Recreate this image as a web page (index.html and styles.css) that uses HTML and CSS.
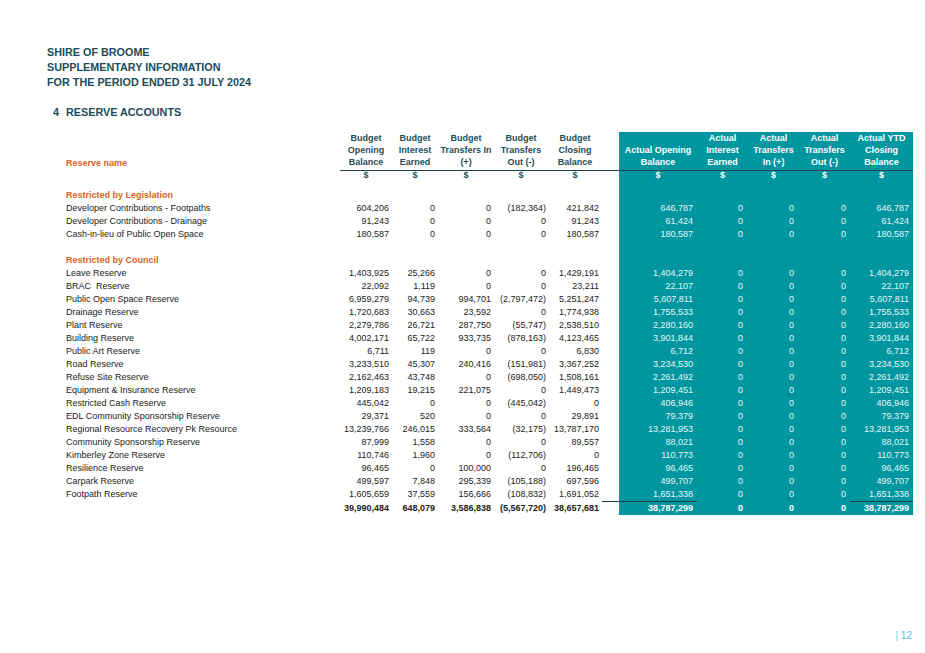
FILE: index.html
```html
<!DOCTYPE html>
<html>
<head>
<meta charset="utf-8">
<title>Reserve Accounts</title>
<link rel="stylesheet" href="styles.css">
</head>
<body>
<div class="page">
  <div class="titles">
    <div class="title">SHIRE OF BROOME</div>
    <div class="title">SUPPLEMENTARY INFORMATION</div>
    <div class="title">FOR THE PERIOD ENDED 31 JULY 2024</div>
  </div>
  <div class="section"><span class="num">4</span>RESERVE ACCOUNTS</div>

  <table class="res">
    <colgroup>
      <col class="c-name"><col class="c-bo"><col class="c-bi"><col class="c-bti"><col class="c-bto"><col class="c-bc">
      <col class="c-gap">
      <col class="c-ao"><col class="c-ai"><col class="c-ati"><col class="c-ato"><col class="c-ac">
    </colgroup>
    <thead>
      <tr class="hdr">
        <th class="name orange">Reserve name</th>
        <th class="b">Budget<br>Opening<br>Balance</th>
        <th class="b">Budget<br>Interest<br>Earned</th>
        <th class="b">Budget<br>Transfers In<br>(+)</th>
        <th class="b">Budget<br>Transfers<br>Out (-)</th>
        <th class="b">Budget<br>Closing<br>Balance</th>
        <th class="b gap"></th>
        <th class="a">Actual Opening<br>Balance</th>
        <th class="a">Actual<br>Interest<br>Earned</th>
        <th class="a">Actual<br>Transfers<br>In (+)</th>
        <th class="a">Actual<br>Transfers<br>Out (-)</th>
        <th class="a">Actual YTD<br>Closing<br>Balance</th>
      </tr>
      <tr class="cur">
        <th></th><th class="b">$</th><th class="b">$</th><th class="b">$</th><th class="b">$</th><th class="b">$</th><th></th>
        <th class="a">$</th><th class="a">$</th><th class="a">$</th><th class="a">$</th><th class="a">$</th>
      </tr>
    </thead>
    <tbody>
      <tr class="sp"><td></td><td></td><td></td><td></td><td></td><td></td><td></td><td class="a"></td><td class="a"></td><td class="a"></td><td class="a"></td><td class="a"></td></tr>
      <tr><td class="name orange bold">Restricted by Legislation</td><td></td><td></td><td></td><td></td><td></td><td></td><td class="a"></td><td class="a"></td><td class="a"></td><td class="a"></td><td class="a"></td></tr>
      <tr><td class="name">Developer Contributions - Footpaths</td><td>604,206</td><td>0</td><td>0</td><td>(182,364)</td><td>421,842</td><td></td><td class="a">646,787</td><td class="a">0</td><td class="a">0</td><td class="a">0</td><td class="a">646,787</td></tr>
      <tr><td class="name">Developer Contributions - Drainage</td><td>91,243</td><td>0</td><td>0</td><td>0</td><td>91,243</td><td></td><td class="a">61,424</td><td class="a">0</td><td class="a">0</td><td class="a">0</td><td class="a">61,424</td></tr>
      <tr><td class="name">Cash-in-lieu of Public Open Space</td><td>180,587</td><td>0</td><td>0</td><td>0</td><td>180,587</td><td></td><td class="a">180,587</td><td class="a">0</td><td class="a">0</td><td class="a">0</td><td class="a">180,587</td></tr>
      <tr><td class="name"></td><td></td><td></td><td></td><td></td><td></td><td></td><td class="a"></td><td class="a"></td><td class="a"></td><td class="a"></td><td class="a"></td></tr>
      <tr><td class="name orange bold">Restricted by Council</td><td></td><td></td><td></td><td></td><td></td><td></td><td class="a"></td><td class="a"></td><td class="a"></td><td class="a"></td><td class="a"></td></tr>
      <tr><td class="name">Leave Reserve</td><td>1,403,925</td><td>25,266</td><td>0</td><td>0</td><td>1,429,191</td><td></td><td class="a">1,404,279</td><td class="a">0</td><td class="a">0</td><td class="a">0</td><td class="a">1,404,279</td></tr>
      <tr><td class="name">BRAC&nbsp; Reserve</td><td>22,092</td><td>1,119</td><td>0</td><td>0</td><td>23,211</td><td></td><td class="a">22,107</td><td class="a">0</td><td class="a">0</td><td class="a">0</td><td class="a">22,107</td></tr>
      <tr><td class="name">Public Open Space Reserve</td><td>6,959,279</td><td>94,739</td><td>994,701</td><td>(2,797,472)</td><td>5,251,247</td><td></td><td class="a">5,607,811</td><td class="a">0</td><td class="a">0</td><td class="a">0</td><td class="a">5,607,811</td></tr>
      <tr><td class="name">Drainage Reserve</td><td>1,720,683</td><td>30,663</td><td>23,592</td><td>0</td><td>1,774,938</td><td></td><td class="a">1,755,533</td><td class="a">0</td><td class="a">0</td><td class="a">0</td><td class="a">1,755,533</td></tr>
      <tr><td class="name">Plant Reserve</td><td>2,279,786</td><td>26,721</td><td>287,750</td><td>(55,747)</td><td>2,538,510</td><td></td><td class="a">2,280,160</td><td class="a">0</td><td class="a">0</td><td class="a">0</td><td class="a">2,280,160</td></tr>
      <tr><td class="name">Building Reserve</td><td>4,002,171</td><td>65,722</td><td>933,735</td><td>(878,163)</td><td>4,123,465</td><td></td><td class="a">3,901,844</td><td class="a">0</td><td class="a">0</td><td class="a">0</td><td class="a">3,901,844</td></tr>
      <tr><td class="name">Public Art Reserve</td><td>6,711</td><td>119</td><td>0</td><td>0</td><td>6,830</td><td></td><td class="a">6,712</td><td class="a">0</td><td class="a">0</td><td class="a">0</td><td class="a">6,712</td></tr>
      <tr><td class="name">Road Reserve</td><td>3,233,510</td><td>45,307</td><td>240,416</td><td>(151,981)</td><td>3,367,252</td><td></td><td class="a">3,234,530</td><td class="a">0</td><td class="a">0</td><td class="a">0</td><td class="a">3,234,530</td></tr>
      <tr><td class="name">Refuse Site Reserve</td><td>2,162,463</td><td>43,748</td><td>0</td><td>(698,050)</td><td>1,508,161</td><td></td><td class="a">2,261,492</td><td class="a">0</td><td class="a">0</td><td class="a">0</td><td class="a">2,261,492</td></tr>
      <tr><td class="name">Equipment &amp; Insurance Reserve</td><td>1,209,183</td><td>19,215</td><td>221,075</td><td>0</td><td>1,449,473</td><td></td><td class="a">1,209,451</td><td class="a">0</td><td class="a">0</td><td class="a">0</td><td class="a">1,209,451</td></tr>
      <tr><td class="name">Restricted Cash Reserve</td><td>445,042</td><td>0</td><td>0</td><td>(445,042)</td><td>0</td><td></td><td class="a">406,946</td><td class="a">0</td><td class="a">0</td><td class="a">0</td><td class="a">406,946</td></tr>
      <tr><td class="name">EDL Community Sponsorship Reserve</td><td>29,371</td><td>520</td><td>0</td><td>0</td><td>29,891</td><td></td><td class="a">79,379</td><td class="a">0</td><td class="a">0</td><td class="a">0</td><td class="a">79,379</td></tr>
      <tr><td class="name">Regional Resource Recovery Pk Resource</td><td>13,239,766</td><td>246,015</td><td>333,564</td><td>(32,175)</td><td>13,787,170</td><td></td><td class="a">13,281,953</td><td class="a">0</td><td class="a">0</td><td class="a">0</td><td class="a">13,281,953</td></tr>
      <tr><td class="name">Community Sponsorship Reserve</td><td>87,999</td><td>1,558</td><td>0</td><td>0</td><td>89,557</td><td></td><td class="a">88,021</td><td class="a">0</td><td class="a">0</td><td class="a">0</td><td class="a">88,021</td></tr>
      <tr><td class="name">Kimberley Zone Reserve</td><td>110,746</td><td>1,960</td><td>0</td><td>(112,706)</td><td>0</td><td></td><td class="a">110,773</td><td class="a">0</td><td class="a">0</td><td class="a">0</td><td class="a">110,773</td></tr>
      <tr><td class="name">Resilience Reserve</td><td>96,465</td><td>0</td><td>100,000</td><td>0</td><td>196,465</td><td></td><td class="a">96,465</td><td class="a">0</td><td class="a">0</td><td class="a">0</td><td class="a">96,465</td></tr>
      <tr><td class="name">Carpark Reserve</td><td>499,597</td><td>7,848</td><td>295,339</td><td>(105,188)</td><td>697,596</td><td></td><td class="a">499,707</td><td class="a">0</td><td class="a">0</td><td class="a">0</td><td class="a">499,707</td></tr>
      <tr><td class="name">Footpath Reserve</td><td>1,605,659</td><td>37,559</td><td>156,666</td><td>(108,832)</td><td>1,691,052</td><td></td><td class="a">1,651,338</td><td class="a">0</td><td class="a">0</td><td class="a">0</td><td class="a">1,651,338</td></tr>
      <tr class="total"><td class="name"></td><td>39,990,484</td><td>648,079</td><td>3,586,838</td><td>(5,567,720)</td><td>38,657,681</td><td class="rule"></td><td class="a rule">38,787,299</td><td class="a">0</td><td class="a">0</td><td class="a">0</td><td class="a rule">38,787,299</td></tr>
    </tbody>
  </table>

  <div class="footer"><span class="bar">|</span> 12</div>
</div>
</body>
</html>
```
FILE: styles.css
```css
html, body {
  margin: 0;
  padding: 0;
  background: #ffffff;
}

body {
  font-family: "Liberation Sans", Arial, sans-serif;
  color: #1e1e1e;
}

.page {
  width: 925px;
  height: 653px;
  box-sizing: border-box;
  padding: 45px 0 0 47px;
  display: flex;
  flex-direction: column;
}

.title {
  font-size: 10.8px;
  font-weight: bold;
  line-height: 15px;
  color: #1b4c5b;
}

.section {
  margin-top: 15px;
  font-size: 10.8px;
  font-weight: bold;
  line-height: 15px;
  color: #1b4c5b;
}

.section .num {
  display: inline-block;
  width: 13px;
  padding-left: 6px;
}

.res {
  margin-top: 12px;
  margin-left: 19px;
  border-collapse: collapse;
  border-spacing: 0;
  table-layout: fixed;
  width: 847px;
  font-size: 9px;
}

.c-name { width: 274px; }
.c-bo { width: 52px; }
.c-bi { width: 46px; }
.c-bti { width: 56px; }
.c-bto { width: 54px; }
.c-bc { width: 54px; }
.c-gap { width: 17px; }
.c-ao { width: 78px; }
.c-ai { width: 51px; }
.c-ati { width: 51px; }
.c-ato { width: 51px; }
.c-ac { width: 63px; }

.res th,
.res td {
  padding: 0;
  white-space: nowrap;
}

.res .hdr th {
  height: 35px;
  padding-bottom: 2px;
  line-height: 12px;
  vertical-align: bottom;
  text-align: center;
  font-weight: bold;
}

.hdr th.b {
  color: #1d4e5c;
  border-bottom: 1px solid #1d4450;
}

.hdr th.a {
  color: #ffffff;
  border-bottom: 1px solid #1d4450;
}

.hdr th.name {
  text-align: left;
}

.cur th {
  height: 10px;
  line-height: 9px;
  vertical-align: top;
  text-align: center;
  font-weight: bold;
  color: #1d4e5c;
}

.cur th.a {
  color: #ffffff;
}

.sp td {
  height: 8px;
}

tbody tr:not(.sp) td {
  height: 13px;
  line-height: 13px;
  text-align: right;
  color: #222222;
}

tbody td:nth-child(2),
tbody td:nth-child(3),
tbody td:nth-child(4),
tbody td:nth-child(5),
tbody td:nth-child(6) {
  padding-right: 3px;
}

tbody td:nth-child(5) {
  padding-right: 2px;
}

tbody td:nth-child(8) { padding-right: 4px; }
tbody td:nth-child(9) { padding-right: 5px; }
tbody td:nth-child(10) { padding-right: 5px; }
tbody td:nth-child(11) { padding-right: 4px; }
tbody td:nth-child(12) { padding-right: 4px; }

tbody tr td.name {
  text-align: left;
}

.orange {
  color: #d9621f !important;
}

.bold {
  font-weight: bold;
}

.res .a {
  background: #0096a0;
}

tbody tr td.a {
  color: #e6f5f5;
}

.total td {
  font-weight: bold;
}

.total td.rule {
  border-top: 1px solid #1d3d47;
}

.total td.a {
  color: #ffffff;
}

.footer {
  margin-top: auto;
  margin-bottom: 11px;
  align-self: flex-end;
  padding-right: 13px;
  font-size: 10px;
  line-height: 12px;
  color: #52c0e4;
}

.footer .bar {
  color: #6ccbe8;
}
```
